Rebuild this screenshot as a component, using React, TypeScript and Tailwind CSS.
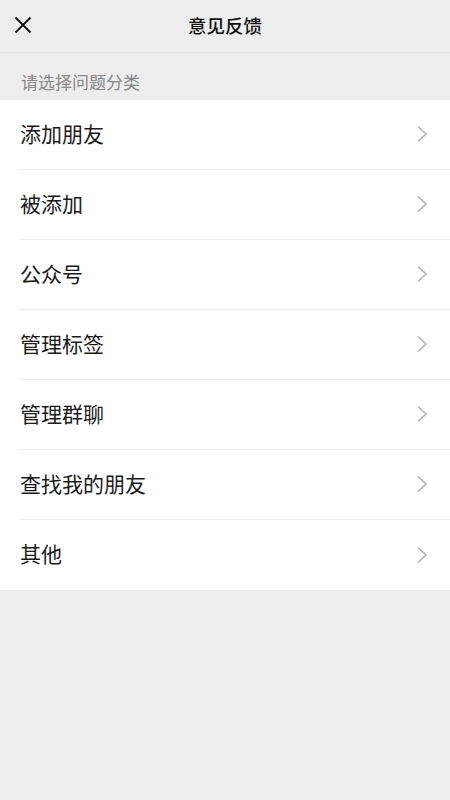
import React from "react";

const items = ["添加朋友", "被添加", "公众号", "管理标签", "管理群聊", "查找我的朋友", "其他"];

export default function App() {
  return (
    <div
      className="w-[450px] h-[800px] bg-[#ededed] flex flex-col"
      style={{ fontFamily: '"Noto Sans CJK SC", "Noto Sans", sans-serif' }}
    >
      <div className="h-[53px] flex items-center relative border-b border-[#e3e3e3] shrink-0">
        <svg className="absolute left-[14px] top-[16px]" width="18" height="18" viewBox="0 0 18 18">
          <path d="M1.5 1.5 L16.5 16.5 M16.5 1.5 L1.5 16.5" stroke="#111" strokeWidth="1.8" fill="none" />
        </svg>
        <div className="w-full text-center text-[18.5px] font-medium text-[#111] leading-none mb-[2px]">意见反馈</div>
      </div>
      <div className="h-[47px] flex items-center px-[21px] text-[17px] text-[#888] pt-[11px] pb-0">
        请选择问题分类
      </div>
      <div className="bg-white">
        {items.map((t, i) => (
          <div key={t} className="pl-[20px]">
            <div
              className={`h-[70px] flex items-center justify-between pr-[22px] ${
                i < items.length - 1 ? "border-b border-[#ececec]" : ""
              }`}
            >
              <span className="text-[21px] text-[#1a1a1a] leading-none mb-[3px]">{t}</span>
              <svg width="12" height="18" viewBox="0 0 12 18" className="mb-[1px]">
                <path d="M2 1.5 L10 9 L2 16.5" stroke="#b2b2b2" strokeWidth="1.6" fill="none" />
              </svg>
            </div>
          </div>
        ))}
      </div>
    </div>
  );
}
